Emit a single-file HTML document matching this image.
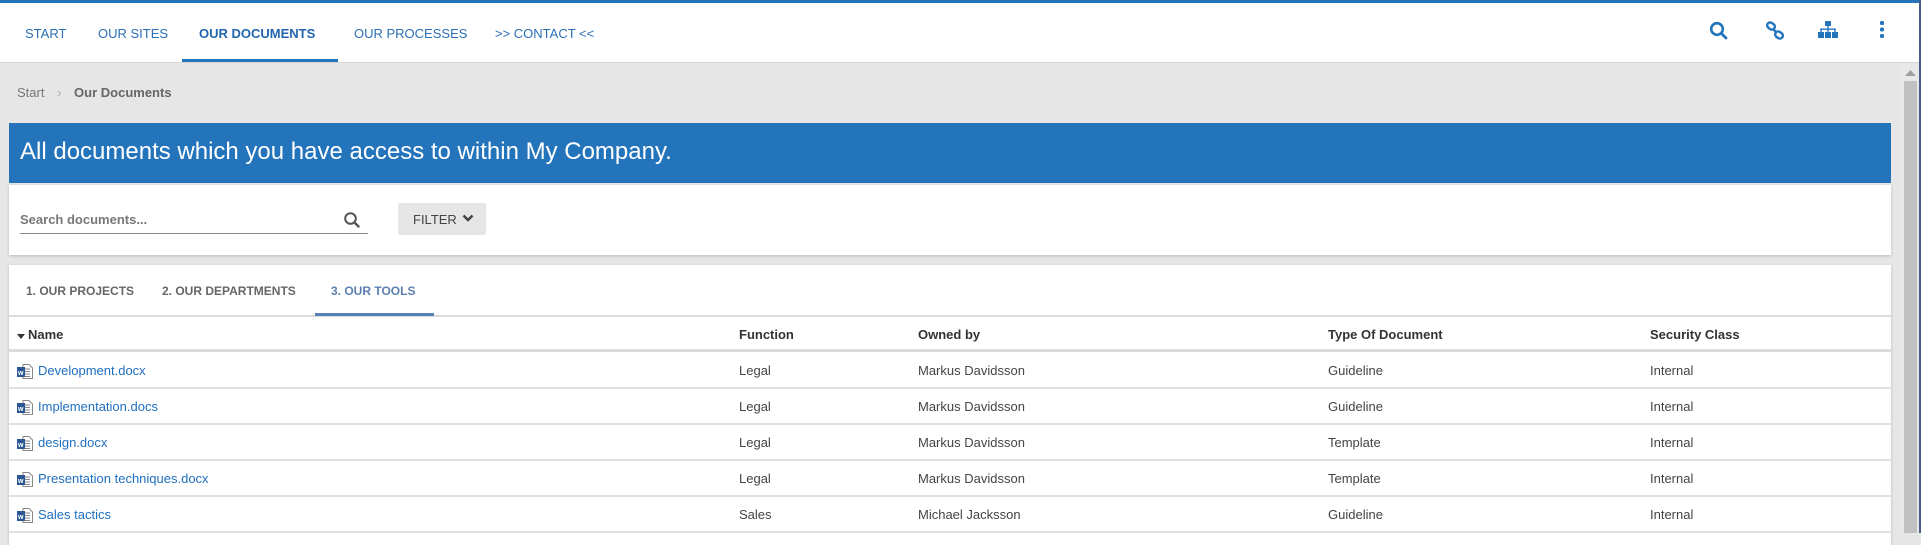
<!DOCTYPE html>
<html><head><meta charset="utf-8"><style>
*{margin:0;padding:0;box-sizing:border-box}
body{width:1921px;height:533px;overflow:hidden;background:#e6e6e6;font-family:"Liberation Sans",sans-serif;position:relative}
.abs{position:absolute}
#top{left:0;top:0;width:1919px;height:3px;background:#2474bb}
#nav{left:0;top:3px;width:1919px;height:60px;background:#fff;border-bottom:1px solid #d6d6d6}
.ni{position:absolute;top:23px;font-size:13px;color:#2a6fb5;white-space:nowrap}
#ul{left:182px;top:59px;width:156px;height:3px;background:#2474bb}
#sb{left:1902px;top:64px;width:17px;height:469px;background:#e8e8e8}
#thumb{left:1904px;top:81px;width:13px;height:452px;background:#c1c1c1}
#rb{left:1919px;top:0;width:2px;height:533px;background:#4a5a8a}
.card{position:absolute;left:9px;width:1882px;background:#fff;box-shadow:0 1px 3px rgba(0,0,0,.18)}
.tab{position:absolute;top:19px;font-size:12px;font-weight:bold;color:#666}
.row{position:absolute;left:0;width:1882px;height:36px;border-bottom:2px solid #e0e0e0;font-size:13px;color:#444}
.row span{position:absolute;top:10px;white-space:nowrap}
.hd span{font-weight:bold;color:#333}
.lnk{color:#1f6fc0}
.ic{position:absolute;left:8px;top:11px}
</style></head><body>
<div id="top" class="abs"></div>
<div id="nav" class="abs">
<span class="ni" style="left:25px">START</span>
<span class="ni" style="left:98px">OUR SITES</span>
<span class="ni" style="left:199px;font-weight:bold;color:#2266ad">OUR DOCUMENTS</span>
<span class="ni" style="left:354px">OUR PROCESSES</span>
<span class="ni" style="left:495px">&gt;&gt; CONTACT &lt;&lt;</span>
<svg class="abs" style="left:1709px;top:18px" width="20" height="20" viewBox="0 0 20 20"><circle cx="8" cy="8" r="5.8" fill="none" stroke="#2474bb" stroke-width="2.6"/><path d="M12.2 12.2L17 17" stroke="#2474bb" stroke-width="2.8" stroke-linecap="round"/></svg>
<svg class="abs" style="left:1765px;top:18px" width="20" height="20" viewBox="0 0 20 20"><g fill="none" stroke="#2474bb" stroke-width="2.4"><rect x="2" y="2" width="8" height="6" rx="3" transform="rotate(35 6 5)"/><rect x="10" y="11" width="8" height="6" rx="3" transform="rotate(35 14 14)"/><path d="M8 8l4 4"/></g></svg>
<svg class="abs" style="left:1817px;top:17px" width="22" height="20" viewBox="0 0 22 20"><g fill="#2474bb"><rect x="8" y="1" width="6" height="5"/><rect x="1" y="12" width="6" height="6"/><rect x="8" y="12" width="6" height="6"/><rect x="15" y="12" width="6" height="6"/><rect x="10.3" y="6" width="1.4" height="6"/><rect x="3.3" y="8.5" width="15.4" height="1.4"/><rect x="3.3" y="8.5" width="1.4" height="4"/><rect x="17.3" y="8.5" width="1.4" height="4"/></g></svg>
<svg class="abs" style="left:1879px;top:17px" width="6" height="20" viewBox="0 0 6 20"><g fill="#2474bb"><rect x="1" y="1" width="4" height="4" rx="1.5"/><rect x="1" y="7.5" width="4" height="4" rx="1.5"/><rect x="1" y="14" width="4" height="4" rx="1.5"/></g></svg>
</div>
<div id="ul" class="abs"></div>
<div class="abs" style="left:17px;top:85px;font-size:13px;color:#777">Start <span style="margin:0 9px;color:#aaa">›</span> <b style="color:#666">Our Documents</b></div>
<div class="abs" style="left:9px;top:123px;width:1882px;height:60px;background:#2474bb;color:#fff;font-size:24px;padding:15px 0 0 11px">All documents which you have access to within My Company.</div>
<div class="card" style="top:185px;height:70px">
<div class="abs" style="left:11px;top:19px;width:348px;height:30px;border-bottom:1.5px solid #888"><span style="position:absolute;left:0;top:8px;font-size:13px;font-weight:bold;color:#777">Search documents...</span>
<svg class="abs" style="left:323px;top:7px" width="18" height="18" viewBox="0 0 18 18"><circle cx="7.5" cy="7.5" r="5.3" fill="none" stroke="#555" stroke-width="2"/><path d="M11.5 11.5L15.5 15.5" stroke="#555" stroke-width="2.4" stroke-linecap="round"/></svg></div>
<div class="abs" style="left:389px;top:18px;width:88px;height:32px;background:#e6e6e6;border-radius:2px;font-size:13px;color:#444;padding:9px 0 0 15px">FILTER <svg style="position:absolute;left:64px;top:11px" width="12" height="9" viewBox="0 0 12 9"><path d="M1.5 1.5L6 6l4.5-4.5" fill="none" stroke="#444" stroke-width="2.4"/></svg></div>
</div>
<div class="card" style="top:265px;height:280px">
<span class="tab" style="left:17px">1. OUR PROJECTS</span>
<span class="tab" style="left:153px">2. OUR DEPARTMENTS</span>
<span class="tab" style="left:322px;color:#5b7fb0">3. OUR TOOLS</span>
<div class="abs" style="left:0;top:50px;width:1882px;height:1.5px;background:#dcdcdc"></div>
<div class="abs" style="left:306px;top:48px;width:119px;height:3px;background:#5580b4"></div>
<div class="row hd" style="top:51px;border-bottom:3px solid #dcdcdc"><span style="left:8px;top:11px"><svg width="8" height="6" style="margin-right:3px"><path d="M0 1h8L4 6z" fill="#333"/></svg>Name</span><span style="left:730px;top:11px">Function</span><span style="left:909px;top:11px">Owned by</span><span style="left:1319px;top:11px">Type Of Document</span><span style="left:1641px;top:11px">Security Class</span></div>
</div>
<div class="abs" style="left:9px;top:353px;width:1882px">
<div class="row" style="top:0"><svg class="ic" width="16" height="15" viewBox="0 0 16 15"><path d="M6 0.5h6l3.5 3.5v10.5H6z" fill="#fff" stroke="#888"/><path d="M8 5h5M8 7.5h5M8 10h5M8 12.5h5" stroke="#888"/><rect x="0" y="3" width="8" height="10" fill="#2b5797"/><text x="1" y="11" font-size="7" fill="#fff" font-family="Liberation Sans" font-weight="bold">w</text></svg><span class="lnk" style="left:29px">Development.docx</span><span style="left:730px">Legal</span><span style="left:909px">Markus Davidsson</span><span style="left:1319px">Guideline</span><span style="left:1641px">Internal</span></div>
<div class="row" style="top:36px"><svg class="ic" width="16" height="15" viewBox="0 0 16 15"><path d="M6 0.5h6l3.5 3.5v10.5H6z" fill="#fff" stroke="#888"/><path d="M8 5h5M8 7.5h5M8 10h5M8 12.5h5" stroke="#888"/><rect x="0" y="3" width="8" height="10" fill="#2b5797"/><text x="1" y="11" font-size="7" fill="#fff" font-family="Liberation Sans" font-weight="bold">w</text></svg><span class="lnk" style="left:29px">Implementation.docs</span><span style="left:730px">Legal</span><span style="left:909px">Markus Davidsson</span><span style="left:1319px">Guideline</span><span style="left:1641px">Internal</span></div>
<div class="row" style="top:72px"><svg class="ic" width="16" height="15" viewBox="0 0 16 15"><path d="M6 0.5h6l3.5 3.5v10.5H6z" fill="#fff" stroke="#888"/><path d="M8 5h5M8 7.5h5M8 10h5M8 12.5h5" stroke="#888"/><rect x="0" y="3" width="8" height="10" fill="#2b5797"/><text x="1" y="11" font-size="7" fill="#fff" font-family="Liberation Sans" font-weight="bold">w</text></svg><span class="lnk" style="left:29px">design.docx</span><span style="left:730px">Legal</span><span style="left:909px">Markus Davidsson</span><span style="left:1319px">Template</span><span style="left:1641px">Internal</span></div>
<div class="row" style="top:108px"><svg class="ic" width="16" height="15" viewBox="0 0 16 15"><path d="M6 0.5h6l3.5 3.5v10.5H6z" fill="#fff" stroke="#888"/><path d="M8 5h5M8 7.5h5M8 10h5M8 12.5h5" stroke="#888"/><rect x="0" y="3" width="8" height="10" fill="#2b5797"/><text x="1" y="11" font-size="7" fill="#fff" font-family="Liberation Sans" font-weight="bold">w</text></svg><span class="lnk" style="left:29px">Presentation techniques.docx</span><span style="left:730px">Legal</span><span style="left:909px">Markus Davidsson</span><span style="left:1319px">Template</span><span style="left:1641px">Internal</span></div>
<div class="row" style="top:144px"><svg class="ic" width="16" height="15" viewBox="0 0 16 15"><path d="M6 0.5h6l3.5 3.5v10.5H6z" fill="#fff" stroke="#888"/><path d="M8 5h5M8 7.5h5M8 10h5M8 12.5h5" stroke="#888"/><rect x="0" y="3" width="8" height="10" fill="#2b5797"/><text x="1" y="11" font-size="7" fill="#fff" font-family="Liberation Sans" font-weight="bold">w</text></svg><span class="lnk" style="left:29px">Sales tactics</span><span style="left:730px">Sales</span><span style="left:909px">Michael Jacksson</span><span style="left:1319px">Guideline</span><span style="left:1641px">Internal</span></div>
</div>
<div id="sb" class="abs"></div>
<svg class="abs" style="left:1905px;top:70px" width="11" height="6"><path d="M0 6L5.5 0 11 6z" fill="#a0a0a0"/></svg>
<div id="thumb" class="abs"></div>
<div id="rb" class="abs"></div>
</body></html>
